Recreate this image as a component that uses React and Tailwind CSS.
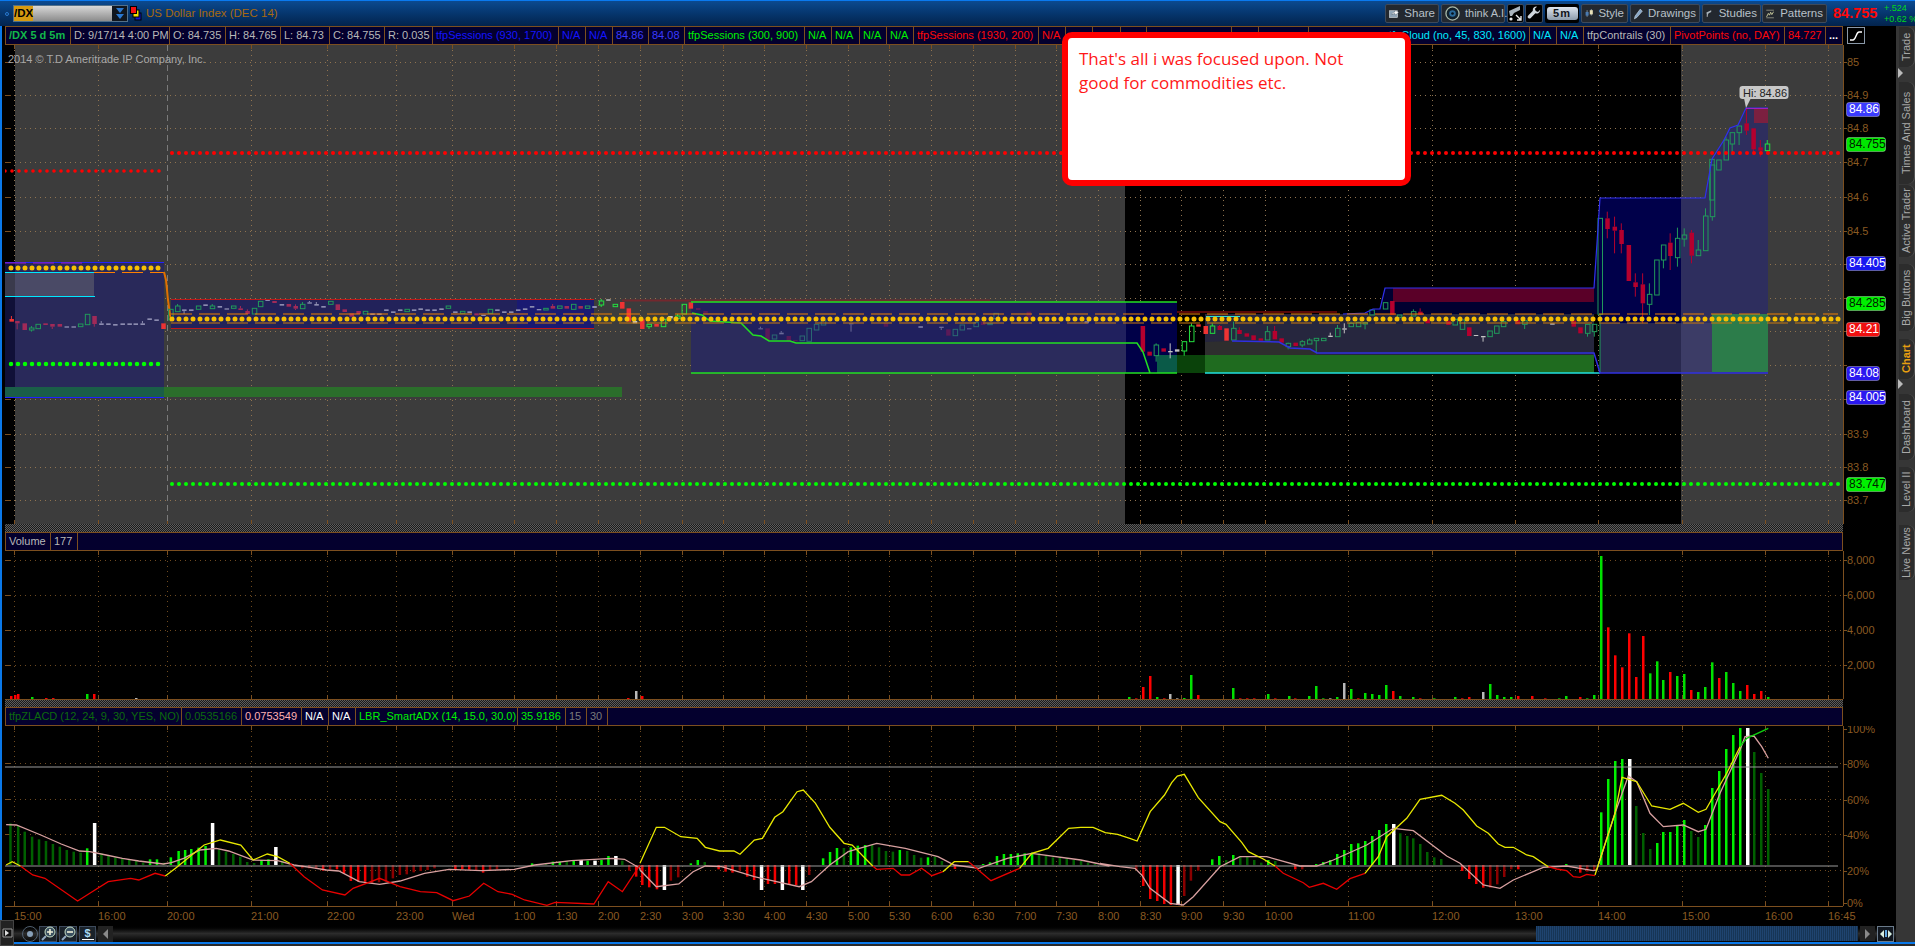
import React from 'react';

// raw zoom-crop readings mapped back to page pixels
const mapCandles = (rows, sx, ox, oy) =>
    rows.map(([x, t, b, k, wt, wb]) => ({
        x: x / sx + ox,
        t: t / 3 + oy,
        b: b / 3 + oy,
        k,
        wt: wt === undefined ? null : wt / 3 + oy,
        wb: wb === undefined ? null : wb / 3 + oy,
    }));

const leftCandles = mapCandles([
    [28, 237, 245, 'R', 228], [42, 243, 250, 'r', 243, 268], [60, 250, 270, 'r'], [77, 264, 270, 'g', 258, 275], [93, 253, 266, 'g'], [111, 250, 255, 'r'], [128, 252, 260, 'r', 252, 267], [146, 252, 260, 'r'],
    [163, 259, 263, 'w'], [180, 259, 263, 'w'], [197, 252, 260, 'g'], [214, 223, 254, 'g'], [231, 228, 252, 'r', 228, 260], [248, 250, 255, 'w', 243], [265, 250, 255, 'w'], [282, 252, 257, 'w'], [300, 250, 255, 'w'], [317, 250, 255, 'w'], [332, 250, 255, 'w'], [349, 250, 255, 'w', 243], [366, 235, 240, 'w'], [383, 238, 243, 'w'], [400, 250, 267, 'R'],
    [418, 208, 240, 'g'], [435, 198, 215, 'g', 192], [451, 208, 213, 'w', 208, 222], [468, 208, 213, 'w'], [486, 198, 208, 'g'], [503, 193, 198, 'w'], [520, 198, 206, 'g', 192], [538, 198, 203, 'w'], [555, 205, 209, 'w'], [572, 198, 205, 'g'], [589, 205, 210, 'r', 198], [606, 213, 222, 'r', 208], [623, 205, 222, 'g'], [638, 184, 200, 'g'], [655, 180, 183, 'w'], [672, 183, 189, 'r'], [690, 192, 197, 'w'], [707, 192, 200, 'r'], [724, 198, 206, 'r', 193, 210], [741, 193, 206, 'g', 186], [758, 187, 191, 'w', 183], [775, 192, 197, 'w', 186], [792, 198, 203, 'w'], [810, 184, 193, 'g'], [827, 193, 210, 'r'], [844, 208, 216, 'r'], [861, 220, 230, 'r'], [878, 213, 222, 'r'], [895, 214, 222, 'g'], [912, 220, 225, 'w'], [929, 220, 225, 'w'], [946, 208, 213, 'w'], [963, 214, 219, 'w'], [980, 208, 213, 'w'], [997, 208, 215, 'g'], [1014, 208, 213, 'w'], [1030, 205, 210, 'w'], [1047, 208, 213, 'w'], [1064, 208, 213, 'w'], [1081, 205, 210, 'w'], [1098, 198, 205, 'g'], [1115, 214, 219, 'w'], [1133, 214, 220, 'g'], [1150, 214, 219, 'w'], [1167, 220, 226, 'r'], [1184, 224, 228, 'w'], [1201, 208, 220, 'g'], [1218, 208, 213, 'w'], [1235, 214, 219, 'w'], [1252, 214, 219, 'w'], [1269, 208, 213, 'w'], [1286, 205, 210, 'w'], [1303, 198, 203, 'w'], [1320, 207, 211, 'w'], [1337, 205, 210, 'g'], [1354, 198, 206, 'r', 192], [1371, 198, 205, 'g'], [1388, 198, 206, 'r'], [1405, 193, 208, 'g'], [1422, 198, 206, 'r'], [1439, 198, 205, 'g'], [1456, 198, 204, 'w'],
    [1473, 183, 195, 'G', 177, 201], [1490, 178, 182, 'W'], [1507, 193, 200, 'G'], [1524, 186, 206, 'R'],
], 2.45, 0, 240);

const midCandles = mapCandles([
    [70, 115, 155, 'R'], [85, 153, 160, 'W'], [103, 148, 177, 'R'], [120, 163, 170, 'G', 163, 177], [138, 162, 170, 'R'], [155, 148, 170, 'G'], [172, 138, 145, 'W'], [190, 138, 145, 'G', 132], [206, 103, 132, 'G'], [222, 97, 116, 'R'], [240, 114, 120, 'D'], [258, 123, 130, 'D'],
    [393, 175, 178, 'F', 170], [410, 175, 210, 'D'], [427, 195, 207, 'E'], [444, 188, 193, 'F', 183], [462, 198, 213, 'D'], [478, 210, 214, 'D'], [495, 198, 212, 'E'], [512, 175, 214, 'E'], [530, 163, 180, 'E'], [547, 150, 165, 'E'], [615, 160, 163, 'F', 160, 185], [700, 160, 170, 'D'], [785, 168, 174, 'F'], [836, 170, 174, 'F', 170, 180], [853, 178, 197, 'D'], [870, 178, 197, 'E'], [887, 165, 180, 'E'], [904, 175, 178, 'F'], [921, 158, 170, 'E'], [938, 155, 165, 'D'], [955, 160, 164, 'E'], [970, 130, 146, 'E'], [1050, 125, 145, 'D'], [1192, 153, 160, 'F'],
], 2.45, 600, 270);

const rightCandles = mapCandles([
    [82, 408, 485, 'C'], [95, 485, 497, 'C'], [108, 465, 497, 'g', 460, 515], [122, 475, 485, 'C'], [135, 483, 487, 'W', 460, 505], [148, 478, 485, 'W'], [162, 455, 483, 'G', 455, 497], [176, 408, 455, 'G', 400],
    [189, 403, 410, 'R'], [203, 408, 432, 'R'], [216, 408, 430, 'G', 400], [230, 408, 420, 'C', 405], [243, 415, 452, 'R'], [257, 415, 450, 'g', 395], [268, 420, 432, 'C', 412], [282, 430, 440, 'C'], [295, 436, 450, 'C'], [309, 445, 452, 'C'], [322, 425, 450, 'g', 408], [336, 423, 448, 'C', 408], [349, 445, 458, 'C'], [362, 460, 470, 'g', 458, 478], [376, 458, 468, 'C'], [389, 455, 465, 'g', 450, 472], [403, 450, 462, 'g', 445], [416, 445, 452, 'g', 445, 490], [430, 445, 452, 'g'], [443, 437, 441, 'W', 428], [457, 415, 440, 'g', 405], [470, 415, 419, 'W', 400, 430], [483, 400, 410, 'g', 395], [497, 397, 410, 'g'], [510, 398, 402, 'g', 395, 418],
    [523, 360, 375, 'g'], [549, 338, 357, 'g'], [562, 333, 375, 'C'], [576, 375, 382, 'g'], [603, 365, 378, 'g', 358], [616, 365, 375, 'C', 355], [630, 388, 400, 'C'], [670, 392, 405, 'C'], [683, 388, 405, 'g'], [697, 390, 418, 'g'], [710, 412, 438, 'C'], [723, 435, 438, 'W'], [737, 438, 442, 'W', 438, 455], [750, 423, 440, 'g'], [763, 408, 430, 'g'], [776, 395, 410, 'g', 380], [803, 390, 403, 'C'], [817, 392, 403, 'g', 390, 417], [870, 400, 404, 'W'], [911, 392, 410, 'C'], [924, 412, 430, 'C'], [938, 403, 430, 'g', 403, 440], [951, 403, 425, 'g', 403, 440],
    [962, 85, 373, 'g', 85, 550], [976, 85, 117, 'C', 65, 145], [990, 110, 122, 'C', 80, 190], [1003, 120, 162, 'C', 100, 190], [1017, 165, 273, 'C'], [1030, 277, 291, 'C', 250, 320], [1044, 283, 340, 'C', 250, 400], [1057, 313, 343, 'g', 280, 375], [1071, 210, 315, 'g'], [1084, 165, 210, 'g', 165, 235], [1097, 158, 198, 'C', 130, 240], [1111, 145, 203, 'g', 113, 230], [1124, 135, 147, 'g', 115, 170], [1138, 128, 197, 'C', 120, 220], [1151, 180, 197, 'g', 150], [1165, 78, 182, 'g', 55], [1178, -75, 80, 'g', -75, 92],
], 1.924, 1100, 190);

const topCandles = mapCandles([
    [1070, 478, 600, 'g'], [1087, 480, 510, 'g'], [1105, 420, 480, 'g', 410], [1120, 398, 432, 'g', 398, 465], [1137, 378, 398, 'g', 378, 435], [1155, 370, 392, 'C', 325, 405], [1172, 385, 448, 'C', 385, 460], [1189, 442, 452, 'C', 420, 470], [1206, 432, 452, 'G', 420, 460],
], 2.45, 1275, 0);

const candleTone = {
    r: { fill: '#a02a58' }, C: { fill: '#b5002e' }, R: { fill: '#ee3333' }, D: { fill: '#5a1a58' },
    g: { stroke: '#21995a' }, G: { stroke: '#22e040' }, E: { stroke: '#2a6a72' },
    w: { fill: '#8c8cb0' }, W: { fill: '#c4c4c4' }, F: { fill: '#6a6a98' },
};

const Candle = ({ c }) => {
    const tone = candleTone[c.k];
    const color = tone.fill || tone.stroke;
    return (
        <g>
            {c.wt !== null && <line x1={c.x} x2={c.x} y1={c.wt} y2={c.t} stroke={color} />}
            {c.wb !== null && <line x1={c.x} x2={c.x} y1={c.b} y2={c.wb} stroke={color} />}
            <rect x={c.x - 2} y={c.t} width={4.5} height={c.b - c.t} fill={tone.fill || 'none'} stroke={tone.stroke || 'none'} />
        </g>
    );
};

// time axis, tick x and label
const times = [[14, '15:00'], [98, '16:00'], [167, '20:00'], [251, '21:00'], [327, '22:00'], [396, '23:00'], [452, 'Wed'], [514, '1:00'], [556, '1:30'], [598, '2:00'], [640, '2:30'], [682, '3:00'], [723, '3:30'], [764, '4:00'], [806, '4:30'], [848, '5:00'], [889, '5:30'], [931, '6:00'], [973, '6:30'], [1015, '7:00'], [1056, '7:30'], [1098, '8:00'], [1140, '8:30'], [1181, '9:00'], [1223, '9:30'], [1265, '10:00'], [1348, '11:00'], [1432, '12:00'], [1515, '13:00'], [1598, '14:00'], [1682, '15:00'], [1765, '16:00'], [1828, '16:45']];

const BROWN = '#7c4f1f';
const TAN = '#8f7350';
const DOT_BROWN = '#6e4a20';

const Grid = ({ top, bottom, rows, color }) => (
    <g>
        {times.map(([x]) => (
            <g key={x}>
                <line x1={x + 0.5} x2={x + 0.5} y1={top} y2={bottom} stroke={color} strokeDasharray="1 4" />
                <line x1={x + 0.5} x2={x + 0.5} y1={top} y2={top + 4} stroke={BROWN} />
                <line x1={x + 0.5} x2={x + 0.5} y1={bottom - 4} y2={bottom} stroke={BROWN} />
            </g>
        ))}
        {rows.map((y) => (
            <g key={y}>
                <line x1={15} x2={1843} y1={y + 0.5} y2={y + 0.5} stroke={color} strokeDasharray="1 4" />
                <line x1={5} x2={11} y1={y + 0.5} y2={y + 0.5} stroke={BROWN} />
            </g>
        ))}
        <line x1={5} x2={1843} y1={bottom + 0.5} y2={bottom + 0.5} stroke={BROWN} />
        <line x1={1843.5} x2={1843.5} y1={top} y2={bottom} stroke={BROWN} />
    </g>
);

const AxisLabels = ({ items }) => (
    <g>
        {items.map(([y, label]) => (
            <g key={y}>
                <line x1={1843} x2={1847} y1={y + 0.5} y2={y + 0.5} stroke={BROWN} />
                {label && <text x={1847} y={y + 4} fill="#8a5a22" fontSize={11}>{label}</text>}
            </g>
        ))}
    </g>
);

const Dots = ({ x1, x2, y, color, r = 5 }) => (
    <line x1={x1} x2={x2} y1={y} y2={y} stroke={color} strokeWidth={r} strokeLinecap="round" strokeDasharray="0 7" />
);

const Tag = ({ y, w, fill, text, label }) => (
    <g>
        <rect x={1846.5} y={y + 0.5} width={w} height={14} rx={2.5} fill={fill} stroke="#ffffff55" />
        <text x={1849} y={y + 11} fill={text} fontSize={12}>{label}</text>
    </g>
);

const PriceChart = () => {
    // the labels between 84.4 and 84 sit behind the price tags
    const priceLabels = [[62, '85'], [95, '84.9'], [128, '84.8'], [162, '84.7'], [197, '84.6'], [231, '84.5'], [264, ''], [298, ''], [331, ''], [365, ''], [399, ''], [434, '83.9'], [467, '83.8'], [500, '83.7']];
    const rows = priceLabels.map(([y]) => y);
    return (
        <svg className="block" width={1891} height={479} viewBox="5 45 1891 479">
            <rect x={5} y={45} width={1891} height={479} fill="#000" />
            <rect x={15} y={45} width={1110} height={479} fill="#3c3c3c" />
            <rect x={1681} y={45} width={162} height={479} fill="#3c3c3c" />
            <Grid top={45} bottom={524} rows={rows} color={TAN} />
            <line x1={167.5} x2={167.5} y1={45} y2={524} stroke="#7a7a7a" strokeDasharray="6 4" />
            <text x={8} y={63} fill="#a8a8a8" fontSize={11}>2014 © T.D Ameritrade IP Company, Inc.</text>

            {/* session on the far left */}
            <rect x={5} y={262} width={159} height={135} fill="#29295a" />
            <rect x={5} y={262} width={10} height={135} fill="#101038" />
            <rect x={15} y={272} width={79} height={24} fill="#4a4a66" />
            <rect x={5} y={272} width={10} height={24} fill="#3a3a4c" />
            <rect x={5} y={387} width={617} height={10} fill="#2b6e2b" />
            <rect x={5} y={387} width={159} height={10} fill="#1a5e48" />
            <line x1={5} x2={164} y1={397.5} y2={397.5} stroke="#2020ff" />
            <line x1={5} x2={164} y1={262.5} y2={262.5} stroke="#2020ff" />
            <line x1={5} x2={84} y1={263} y2={263} stroke="#a020c0" strokeDasharray="21 7" />
            <line x1={5} x2={94} y1={272.5} y2={272.5} stroke="#00e8ff" />
            <line x1={5} x2={95} y1={296.5} y2={296.5} stroke="#00e8ff" />
            <line x1={94} x2={164} y1={272.5} y2={272.5} stroke="#ff8000" strokeDasharray="21 7" />
            <polyline points="164,272 166,280 168,300 170,315 172,322" fill="none" stroke="#e07000" strokeWidth={2} />

            {/* red box */}
            <rect x={171} y={300} width={423} height={28} fill="#22225a" />
            <rect x={517} y={300} width={77} height={28} fill="#1a1a72" />
            <line x1={171} x2={594} y1={299.5} y2={299.5} stroke="#c01818" />
            <line x1={171} x2={594} y1={328.5} y2={328.5} stroke="#c01818" />
            <line x1={622} x2={990} y1={300.5} y2={300.5} stroke="#73282e" strokeWidth={2} />
            <line x1={1039} x2={1079} y1={312} y2={312} stroke="#5a1018" strokeWidth={2} />
            <line x1={1102} x2={1337} y1={312} y2={312} stroke="#5a0808" strokeWidth={2} />

            {/* green box */}
            <rect x={691} y={302} width={435} height={71} fill="#2b2b5c" />
            <polygon points="691,302 1126,302 1126,343 796,343 790,341 769,341 761,336 753,335 741,323 710,321 702,315 692,313" fill="#20205e" />
            <rect x={1126} y={302} width={51} height={71} fill="#000048" />
            <rect x={1157} y={355} width={20} height={18} fill="#0a5a48" />
            <rect x={1177} y={355} width={28} height={18} fill="#0a420a" />
            <rect x={1205} y={314} width={389} height={41} fill="#26263e" />
            <polygon points="1205,342 1232,341 1279,342 1290,348 1310,349 1317,353 1317,355 1205,355" fill="#2e2e2e" />
            <rect x={1205} y={355} width={389} height={18} fill="#1f6b1f" />

            {/* breakout boxes */}
            <polygon points="1343,314 1365,313 1373,309 1380,309 1385,288 1594,288 1600,198 1600,314" fill="#000030" />
            <rect x={1393} y={288} width={201} height={14} fill="#5a0028" />
            <rect x={1600} y={198} width={81} height={125} fill="#00004a" />
            <rect x={1600} y={323} width={81} height={50} fill="#28284e" />
            <polygon points="1681,198 1705,198 1712,159 1724,140 1730,128 1738,125 1746,108 1768,108 1768,373 1681,373" fill="#2e2e5e" />
            <rect x={1681} y={323} width={31} height={50} fill="#3c3c66" />
            <rect x={1754} y={108} width={14} height={15} fill="#7b2040" />
            <rect x={1712} y={314} width={56} height={58} fill="#2c7c4a" />

            {leftCandles.map((c, i) => <Candle key={i} c={c} />)}
            {midCandles.map((c, i) => <Candle key={i} c={c} />)}
            {rightCandles.map((c, i) => <Candle key={i} c={c} />)}
            {topCandles.map((c, i) => <Candle key={i} c={c} />)}

            <line x1={691} x2={1177} y1={302} y2={302} stroke="#22e022" strokeWidth={1.5} />
            <line x1={691} x2={1177} y1={373} y2={373} stroke="#22e022" strokeWidth={1.5} />
            <polyline points="692,313 702,315 710,321 741,323 753,335 761,336 769,341 790,341 796,343 1137,343 1143,352 1150,373" fill="none" stroke="#22e022" strokeWidth={1.5} />
            <line x1={1205} x2={1600} y1={373} y2={373} stroke="#20e0e0" strokeWidth={1.5} />
            <line x1={1206} x2={1240} y1={316.5} y2={316.5} stroke="#20e0e0" />
            <polyline points="1232,341 1279,342 1290,348 1310,349 1317,353 1594,353 1600,373 1768,373" fill="none" stroke="#3030e0" strokeWidth={1.5} />
            <polyline points="1343,314 1365,313 1373,309 1380,309 1385,288 1594,288 1600,198 1705,198 1712,159 1724,140 1730,128 1738,125 1746,108 1768,108" fill="none" stroke="#3030f0" strokeWidth={1.2} />
            <line x1={1746} x2={1768} y1={108.5} y2={108.5} stroke="#a020c0" />

            <line x1={171} x2={1838} y1={314} y2={314} stroke="#f08000" strokeWidth={1.2} strokeDasharray="21 7" />
            <line x1={171} x2={1838} y1={323} y2={323} stroke="#c87a10" strokeWidth={1.2} strokeDasharray="21 7" />
            <Dots x1={11} x2={165} y={268} color="#f8c000" />
            <Dots x1={172} x2={1839} y={319} color="#f8c000" />
            <Dots x1={11} x2={165} y={364} color="#00ff00" r={4.5} />
            <Dots x1={172} x2={1839} y={484} color="#00ff00" r={4} />
            <Dots x1={5} x2={165} y={171} color="#ff0000" r={3.6} />
            <Dots x1={172} x2={1839} y={153} color="#ff0000" r={4} />

            <AxisLabels items={priceLabels} />
            <Tag y={102} w={33} fill="#3b3bff" text="#fff" label="84.86" />
            <Tag y={137} w={39} fill="#00e800" text="#002000" label="84.755" />
            <Tag y={256} w={39} fill="#1818f0" text="#fff" label="84.405" />
            <Tag y={296} w={39} fill="#00f000" text="#002000" label="84.285" />
            <Tag y={322} w={33} fill="#f01010" text="#fff" label="84.21" />
            <Tag y={366} w={33} fill="#2a18f0" text="#fff" label="84.08" />
            <Tag y={390} w={39} fill="#2a18f0" text="#fff" label="84.005" />
            <Tag y={477} w={39} fill="#00f000" text="#002000" label="83.747" />

            <polygon points="1744,98 1751,98 1746,108" fill="#c8c8c8" />
            <rect x={1739.5} y={86} width={49} height={13} rx={3} fill="#c8c8c8" />
            <text x={1743} y={96.5} fill="#222" fontSize={11}>Hi: 84.86</text>
        </svg>
    );
};

// volume: [x, top y, colour]; small bars read from 1100-1600, big ones from 1600 on
const vs = { g: '#00e000', r: '#ff0000', w: '#b8b8b8' };
const volumeBars = [
    [11, 696, 'r'], [15, 695, 'r'], [18, 694, 'r'], [32, 697, 'g'], [46, 698, 'r'], [53, 698, 'r'], [87, 694, 'g'], [94, 694, 'r'], [136, 698, 'w'], [628, 698, 'r'], [636, 691, 'w'], [642, 696, 'r'],
    ...[[87, 171, 'g'], [108, 175, 'r'], [129, 141, 'r'], [150, 108, 'r'], [171, 171, 'g'], [192, 175, 'r'], [210, 162, 'w'], [231, 175, 'w'], [252, 174, 'g'], [273, 105, 'g'], [294, 165, 'r'], [399, 144, 'g'], [420, 175, 'r'], [441, 175, 'r'], [462, 175, 'r'], [504, 162, 'g'], [525, 175, 'r'], [567, 168, 'g'], [585, 175, 'r'], [627, 168, 'g'], [648, 138, 'g'], [669, 175, 'g'], [690, 175, 'w'], [711, 171, 'g'], [732, 129, 'w'], [753, 147, 'g'], [774, 175, 'r'], [795, 159, 'g'], [816, 162, 'g'], [837, 165, 'g'], [858, 135, 'g'], [879, 153, 'r'], [900, 168, 'g'], [939, 171, 'g'], [960, 175, 'r'], [1002, 175, 'g'], [1065, 171, 'g'], [1086, 175, 'r'], [1107, 171, 'r'], [1149, 156, 'w'], [1170, 132, 'g'], [1191, 165, 'g'], [1212, 171, 'g'], [1233, 171, 'g'], [1254, 168, 'r'], [1296, 168, 'r'], [1335, 175, 'r'], [1377, 175, 'g'], [1398, 168, 'g'], [1440, 171, 'r'], [1461, 175, 'g'], [1482, 165, 'g']].map(([x, y, k]) => [x / 3 + 1100, y / 3 + 640, k]),
    ...[[303, 78, 'g'], [324, 292, 'r'], [345, 376, 'r'], [366, 412, 'r'], [387, 310, 'r'], [408, 441, 'r'], [429, 318, 'r'], [450, 430, 'g'], [471, 394, 'g'], [489, 450, 'g'], [510, 426, 'r'], [531, 438, 'g'], [552, 432, 'g'], [573, 480, 'r'], [594, 486, 'g'], [615, 471, 'g'], [636, 397, 'g'], [657, 444, 'r'], [678, 426, 'g'], [699, 459, 'g'], [720, 483, 'g'], [741, 465, 'r'], [762, 492, 'r'], [783, 483, 'r'], [804, 501, 'g']].map(([x, y, k]) => [x / 3 + 1500, y / 3 + 530, k]),
];

const VolumeChart = () => (
    <svg className="block" width={1891} height={149} viewBox="5 551 1891 149">
        <rect x={5} y={551} width={1891} height={149} fill="#000" />
        <Grid top={551} bottom={699} rows={[560, 595, 630, 665]} color={DOT_BROWN} />
        {volumeBars.map(([x, y, k], i) => <rect key={i} x={x - 1} y={y} width={2.5} height={699 - y} fill={vs[k]} />)}
        <AxisLabels items={[[560, '8,000'], [595, '6,000'], [630, '4,000'], [665, '2,000']]} />
    </svg>
);

const mapBars = (rows, sx, ox, oy) => rows.map(([x, y, k]) => [x / sx + ox, y / 3 + oy, k]);
const hs = { g: '#00f000', d: '#006000', r: '#f00000', e: '#8a0000', w: '#ffffff' };
const histBars = [
    ...mapBars([[25, 250, 'd'], [44, 258, 'd'], [60, 275, 'd'], [78, 290, 'd'], [95, 298, 'd'], [112, 303, 'd'], [129, 312, 'd'], [146, 320, 'd'], [163, 330, 'd'], [180, 335, 'd'], [197, 338, 'd'], [213, 325, 'g'], [230, 249, 'w'], [248, 340, 'd'], [265, 345, 'd'], [282, 352, 'd'], [299, 355, 'd'], [316, 358, 'd'], [333, 363, 'd'], [350, 368, 'd'], [367, 358, 'g'], [384, 358, 'g'], [401, 368, 'd'], [418, 352, 'g'], [437, 333, 'g'], [453, 330, 'g'], [468, 327, 'g'], [486, 323, 'g'], [503, 318, 'g'], [519, 249, 'w'], [536, 328, 'd'], [553, 335, 'd'], [571, 342, 'd'], [588, 350, 'd'], [605, 366, 'd'], [622, 369, 'd'], [640, 360, 'g'], [657, 358, 'g'], [674, 321, 'w'], [691, 362, 'd'], [740, 385, 'e'], [757, 385, 'e'], [774, 385, 'e'], [791, 392, 'r'], [808, 388, 'e'], [825, 388, 'r'], [842, 400, 'r'], [859, 423, 'r'], [877, 425, 'r'], [894, 425, 'r'], [911, 430, 'e'], [928, 427, 'e'], [945, 425, 'e'], [962, 415, 'e'], [979, 405, 'e'], [996, 403, 'e'], [1013, 397, 'e'], [1030, 393, 'e'], [1047, 390, 'e'], [1064, 385, 'e'], [1115, 387, 'r'], [1132, 387, 'r'], [1149, 389, 'r'], [1166, 392, 'e'], [1183, 398, 'r'], [1200, 390, 'e'], [1217, 388, 'e'], [1303, 370, 'g'], [1320, 372, 'g'], [1337, 372, 'd'], [1354, 365, 'g'], [1371, 365, 'g'], [1388, 363, 'd'], [1405, 360, 'g'], [1422, 360, 'w'], [1439, 362, 'g'], [1456, 362, 'w'], [1473, 360, 'g'], [1490, 348, 'g'], [1507, 348, 'w'], [1524, 362, 'd'], [1541, 392, 'e'], [1558, 410, 'r']], 2.45, 0, 740),
    ...mapBars([[5, 435, 'r'], [22, 442, 'r'], [41, 448, 'r'], [58, 450, 'w'], [75, 422, 'e'], [93, 412, 'e'], [124, 370, 'g'], [141, 360, 'g'], [158, 366, 'd'], [192, 388, 'r'], [209, 395, 'r'], [226, 398, 'r'], [244, 392, 'e'], [262, 410, 'r'], [279, 420, 'r'], [296, 450, 'w'], [313, 432, 'r'], [330, 432, 'r'], [347, 450, 'w'], [365, 435, 'r'], [382, 435, 'r'], [397, 450, 'w'], [414, 405, 'e'], [448, 355, 'g'], [465, 336, 'g'], [482, 324, 'g'], [499, 324, 'd'], [516, 322, 'g'], [533, 317, 'g'], [551, 315, 'g'], [568, 315, 'd'], [585, 322, 'd'], [602, 333, 'd'], [619, 335, 'd'], [636, 330, 'g'], [654, 333, 'd'], [671, 345, 'd'], [688, 353, 'd'], [705, 352, 'g'], [722, 350, 'd'], [739, 363, 'd'], [771, 387, 'r'], [840, 372, 'g'], [857, 367, 'g'], [874, 348, 'g'], [891, 342, 'g'], [908, 342, 'g'], [925, 340, 'g'], [942, 340, 'g'], [960, 338, 'g'], [977, 340, 'd'], [994, 348, 'd'], [1011, 352, 'd'], [1028, 352, 'd'], [1045, 355, 'd'], [1062, 360, 'd'], [1080, 362, 'd'], [1097, 368, 'd'], [1114, 372, 'd']], 2.45, 640, 740),
    ...mapBars([[108, 690, 'e'], [129, 738, 'r'], [150, 777, 'r'], [171, 783, 'r'], [192, 792, 'r'], [212, 795, 'r'], [232, 795, 'w'], [252, 768, 'e'], [272, 722, 'e'], [294, 692, 'e'], [336, 658, 'g'], [357, 648, 'g'], [378, 660, 'd'], [399, 645, 'g'], [420, 650, 'd'], [441, 650, 'd'], [462, 660, 'd'], [483, 668, 'd'], [504, 660, 'g'], [525, 663, 'd'], [585, 688, 'r'], [606, 688, 'e'], [648, 672, 'g'], [669, 666, 'g'], [690, 660, 'g'], [711, 642, 'g'], [732, 630, 'g'], [753, 612, 'g'], [774, 610, 'g'], [795, 603, 'g'], [816, 588, 'g'], [837, 570, 'g'], [858, 552, 'g'], [879, 552, 'w'], [900, 580, 'd'], [921, 588, 'd'], [939, 595, 'd'], [960, 612, 'd'], [981, 636, 'd'], [1002, 652, 'd'], [1023, 657, 'd'], [1086, 693, 'r'], [1107, 717, 'r'], [1128, 732, 'r'], [1149, 743, 'r'], [1170, 743, 'e'], [1191, 733, 'e'], [1212, 711, 'e'], [1233, 688, 'e'], [1254, 688, 'r'], [1296, 675, 'g'], [1398, 672, 'g'], [1440, 698, 'r'], [1461, 695, 'e'], [1482, 690, 'e']], 3, 1100, 640),
    ...mapBars([[303, 847, 'g'], [324, 747, 'g'], [345, 693, 'g'], [366, 687, 'g'], [387, 687, 'w'], [408, 828, 'd'], [429, 909, 'd'], [450, 957, 'd'], [471, 939, 'g'], [489, 906, 'g'], [510, 906, 'g'], [531, 885, 'g'], [552, 870, 'g'], [573, 903, 'd'], [594, 921, 'd'], [615, 885, 'g'], [636, 774, 'g'], [657, 723, 'g'], [678, 657, 'g'], [699, 615, 'g'], [720, 594, 'g'], [741, 594, 'w'], [762, 666, 'd'], [783, 729, 'd'], [804, 777, 'd']], 3, 1500, 530),
];

const pts = (rows, sx, ox, oy) => rows.map(([x, y]) => `${(x / sx + ox).toFixed(1)},${(y / 3 + oy).toFixed(1)}`).join(' ');

const pinkLine = [
    pts([[15, 254], [40, 255], [100, 285], [150, 312], [195, 333], [220, 335], [260, 345], [300, 355], [340, 363], [400, 372], [420, 368], [450, 355], [490, 330], [530, 325], [560, 333], [620, 360], [680, 362], [720, 375], [760, 382], [800, 390], [830, 393], [880, 425], [930, 433], [980, 423], [1040, 400], [1100, 388], [1180, 392], [1260, 388], [1310, 375], [1400, 362], [1500, 355], [1530, 358], [1568, 385]], 2.45, 0, 740),
    pts([[0, 390], [40, 440], [95, 432], [130, 395], [160, 378], [200, 380], [280, 410], [390, 440], [420, 425], [465, 375], [510, 335], [580, 310], [650, 325], [730, 350], [770, 375], [830, 385], [900, 355], [960, 340], [1080, 360], [1150, 378]], 2.45, 640, 740),
    pts([[0, 670], [60, 680], [105, 685], [125, 705], [150, 745], [210, 790], [250, 795], [280, 770], [360, 680], [420, 650], [500, 650], [600, 678], [650, 678], [700, 660], [800, 615], [880, 565], [940, 572], [1040, 648], [1080, 670], [1150, 735], [1200, 745], [1240, 720], [1330, 682], [1400, 678], [1440, 685], [1480, 692]], 3, 1100, 640),
    pts([[290, 1020], [345, 850], [385, 738], [410, 755], [450, 850], [490, 890], [550, 885], [595, 905], [618, 898], [660, 790], [720, 660], [735, 620], [762, 618], [785, 650], [805, 685]], 3, 1500, 530),
].join(' ');

const Z7 = (r) => pts(r, 2.45, 0, 740);
const Z9 = (r) => pts(r, 2.45, 640, 740);
const Z12 = (r) => pts(r, 3, 1100, 640);
const Z8 = (r) => pts(r, 3, 1500, 530);

const yellowLines = [
    Z7([[15, 375], [30, 365], [50, 378]]),
    Z7([[405, 408], [430, 385], [500, 315], [540, 300], [590, 315], [620, 360], [655, 342], [680, 350], [710, 370]]),
    Z9([[0, 370], [40, 262], [60, 262], [100, 290], [140, 295], [160, 322], [195, 333], [230, 333], [245, 343], [280, 300], [300, 295], [330, 232], [350, 215], [385, 155], [400, 150], [430, 190], [465, 262], [500, 310], [520, 315], [570, 378]]),
    Z9([[742, 395], [770, 365], [805, 365]]),
    Z9([[930, 385], [960, 340], [1000, 325], [1050, 265], [1080, 262], [1110, 262], [1140, 278], [1170, 283], [1200, 295], [1218, 303], [1250, 215], [1285, 165]]) + ' ' + Z12([[215, 428], [232, 408], [253, 403], [295, 473], [360, 545], [378, 553], [425, 607], [445, 635], [490, 657], [525, 678]]),
    Z12([[795, 700], [835, 650], [860, 590], [920, 535], [960, 478], [1025, 466], [1065, 490], [1090, 510], [1130, 558], [1165, 580], [1195, 612], [1215, 622], [1240, 622], [1280, 645], [1300, 650], [1345, 680]]),
    Z8([[285, 1035], [345, 850], [366, 742], [410, 755], [455, 828], [510, 838], [550, 820], [595, 847], [618, 838], [680, 730], [720, 650]]),
];
const redLines = [
    Z7([[50, 378], [80, 405], [110, 415], [190, 483], [220, 460], [265, 425], [320, 415], [340, 420], [380, 400], [405, 408]]),
    Z7([[710, 370], [745, 410], [790, 450], [845, 465], [865, 445], [930, 415], [980, 440], [1030, 455], [1070, 458], [1110, 482], [1150, 468], [1185, 430], [1220, 455], [1255, 463], [1285, 480], [1340, 496], [1360, 487], [1455, 492], [1490, 425], [1525, 455], [1568, 375]]),
    Z9([[570, 378], [580, 388], [620, 385], [640, 405], [660, 405], [690, 385], [715, 407], [742, 395]]),
    Z9([[805, 365], [860, 422], [930, 385]]),
    Z12([[525, 678], [550, 700], [610, 728], [628, 742], [670, 730], [710, 748], [750, 716], [795, 700]]),
    Z12([[1345, 680], [1370, 687], [1400, 692], [1420, 710], [1440, 712], [1460, 703], [1485, 707]]),
];

const OscChart = () => (
    <svg className="block" width={1891} height={199} viewBox="5 726 1891 199">
        <rect x={5} y={726} width={1891} height={199} fill="#000" />
        <Grid top={726} bottom={906} rows={[763, 799, 834, 870]} color={DOT_BROWN} />
        {histBars.map(([x, y, k], i) => (
            <rect key={i} x={x - 1} y={Math.min(y, 865)} width={k === 'w' ? 3.5 : 2.5} height={Math.abs(y - 865)} fill={hs[k]} />
        ))}
        <line x1={5} x2={1838} y1={767} y2={767} stroke="#9a9a9a" />
        <line x1={5} x2={1838} y1={866} y2={866} stroke="#9a9a9a" />
        <polyline points={pinkLine} fill="none" stroke="#d8a0a0" strokeWidth={1.3} />
        {redLines.map((p, i) => <polyline key={i} points={p} fill="none" stroke="#e80000" strokeWidth={1.3} />)}
        {yellowLines.map((p, i) => <polyline key={i} points={p} fill="none" stroke="#e8e800" strokeWidth={1.3} />)}
        <polyline points={Z8([[720, 650], [740, 625], [805, 595]])} fill="none" stroke="#10d010" strokeWidth={1.3} />
        <AxisLabels items={[[729, '100%'], [764, '80%'], [800, '60%'], [835, '40%'], [871, '20%'], [903, '0%']]} />
        {times.map(([x, label]) => (
            <text key={x} x={x} y={920} fill="#8a5a22" fontSize={11}>{label}</text>
        ))}
    </svg>
);

const BLUE = 'text-[#1414ff]';
const GREEN = 'text-[#00f000]';
const RED = 'text-[#ff0808]';
const CYAN = 'text-[#00e8ff]';
const GREY = 'text-[#b8b8b8]';

const mainCells = [
    { t: '/DX 5 d 5m', w: 'w-[65px]', c: 'text-[#12b84a] font-bold' },
    { t: 'D: 9/17/14 4:00 PM', w: 'w-[99px]', c: GREY },
    { t: 'O: 84.735', w: 'w-[56px]', c: GREY },
    { t: 'H: 84.765', w: 'w-[55px]', c: GREY },
    { t: 'L: 84.73', w: 'w-[49px]', c: GREY },
    { t: 'C: 84.755', w: 'w-[55px]', c: GREY },
    { t: 'R: 0.035', w: 'w-[48px]', c: GREY },
    { t: 'tfpSessions (930, 1700)', w: 'w-[126px]', c: BLUE },
    { t: 'N/A', w: 'w-[27px]', c: BLUE },
    { t: 'N/A', w: 'w-[27px]', c: BLUE },
    { t: '84.86', w: 'w-[36px]', c: 'text-[#3a3aff]' },
    { t: '84.08', w: 'w-[36px]', c: 'text-[#3a3aff]' },
    { t: 'tfpSessions (300, 900)', w: 'w-[120px]', c: GREEN },
    { t: 'N/A', w: 'w-[27px]', c: GREEN },
    { t: 'N/A', w: 'w-[28px]', c: GREEN },
    { t: 'N/A', w: 'w-[27px]', c: GREEN },
    { t: 'N/A', w: 'w-[27px]', c: GREEN },
    { t: 'tfpSessions (1930, 200)', w: 'w-[125px]', c: RED },
    { t: 'N/A', w: 'w-[27px]', c: RED },
    // these sit under the note, only their top edge shows
    { t: '', w: 'w-[27px]', c: RED },
    { t: '', w: 'w-[28px]', c: RED },
    { t: '', w: 'w-[26px]', c: RED },
    { t: '', w: 'w-[85px]', c: RED },
    { t: '', w: 'w-[27px]', c: RED },
    { t: '', w: 'w-[50px]', c: RED },
    { t: 'tfpCloud (no, 45, 830, 1600)', w: 'w-[221px] text-right', c: CYAN },
    { t: 'N/A', w: 'w-[27px]', c: CYAN },
    { t: 'N/A', w: 'w-[27px]', c: CYAN },
    { t: 'tfpContrails (30)', w: 'w-[87px]', c: GREY },
    { t: 'PivotPoints (no, DAY)', w: 'w-[114px]', c: RED },
    { t: '84.727', w: 'w-[41px]', c: RED },
    { t: '...', w: 'w-[18px]', c: 'text-white font-bold' },
];

const volumeCells = [
    { t: 'Volume', w: 'w-[45px]', c: GREY },
    { t: '177', w: 'w-[27px]', c: GREY },
];

const oscCells = [
    { t: 'tfpZLACD (12, 24, 9, 30, YES, NO)', w: 'w-[176px]', c: 'text-[#0d6a0d]' },
    { t: '0.0535166', w: 'w-[60px]', c: 'text-[#0d6a0d]' },
    { t: '0.0753549', w: 'w-[60px]', c: 'text-[#ffb0b0]' },
    { t: 'N/A', w: 'w-[27px]', c: 'text-white' },
    { t: 'N/A', w: 'w-[27px]', c: 'text-white' },
    { t: 'LBR_SmartADX (14, 15.0, 30.0)', w: 'w-[162px]', c: GREEN },
    { t: '35.9186', w: 'w-[48px]', c: GREEN },
    { t: '15', w: 'w-[21px]', c: 'text-[#7a7a7a]' },
    { t: '30', w: 'w-[21px]', c: 'text-[#7a7a7a]' },
];

const StatusRow = ({ cells, children }) => (
    <div className="flex h-[19px] w-[1891px] shrink-0 bg-black">
        <div className="flex w-[1838px] overflow-hidden border border-[#7c4f1f] bg-[#04002e] text-[11px] leading-[17px]">
            {cells.map((cell, i) => (
                <div key={i} className={`${cell.w} ${cell.c} shrink-0 overflow-hidden whitespace-nowrap border-r border-[#7c4f1f] px-[3px]`}>
                    {cell.t}
                </div>
            ))}
        </div>
        {children}
    </div>
);

const Hatch = ({ className }) => (
    <div className={`${className} w-[1838px] shrink-0 bg-[repeating-conic-gradient(#5c5c5c_0_25%,#1a1a1a_0_50%)] bg-[length:2px_2px]`} />
);

const toolBtn = 'flex h-[19px] shrink-0 items-center gap-[5px] whitespace-nowrap rounded-[2px] border border-[#3d4a5c] bg-[#23282f] px-[3px] text-[11.5px] text-[#b8c0c8]';

const Flask = () => (
    <svg width="13" height="15" viewBox="0 0 13 15">
        <polygon points="1,5 12,0 12,4 6,7 4,11 2,11" fill="#aab4bc" />
        <circle cx="3" cy="13" r="1.6" fill="#e8e8e8" />
    </svg>
);

const Toolbar = () => (
    <div className="flex items-center gap-[2px]">
        <div className={`${toolBtn} w-[54px]`}>
            <svg width="17" height="15" viewBox="0 0 17 15">
                <rect x="1" y="3" width="13" height="11" fill="#8fa3b5" stroke="#dfe6ec" />
                <path d="M5 10 C5 6 8 5 10 5 V2 L16 6 L10 10 V7.5 C8 7.5 6 8 5 10Z" fill="#fff" stroke="#33404c" strokeWidth=".5" />
            </svg>
            Share
        </div>
        <div className={`${toolBtn} w-[64px] gap-[2px] text-[11px]`}>
            <svg className="shrink-0" width="15" height="15" viewBox="0 0 16 16">
                <circle cx="8" cy="8" r="7" fill="#10202c" stroke="#a8b8a8" strokeWidth="1.4" />
                <circle cx="8" cy="8" r="3.5" fill="#2a6a9a" />
                <circle cx="8" cy="8" r="1.4" fill="#05101a" />
            </svg>
            think A.I.
        </div>
        <div className="flex h-[19px] w-[17px] items-center justify-center rounded-[2px] border border-[#3d4a5c] bg-black">
            <svg width="15" height="15" viewBox="0 0 15 15">
                <polygon points="1,5 12,0 12,4 6,7 4,10 2,10" fill="#aab4bc" />
                <circle cx="3" cy="13" r="1.6" fill="#e8e8e8" />
                <path d="M8 9 L13 14 M13 10 V14 H9" stroke="#e8e8e8" strokeWidth="1.4" fill="none" />
            </svg>
        </div>
        <div className="-ml-[1px] flex h-[19px] w-[18px] items-center justify-center rounded-[2px] border border-[#3d4a5c] bg-black">
            <svg width="15" height="15" viewBox="0 0 24 24" fill="#cfd6dc">
                <path d="M21 6.5a5.5 5.5 0 0 1-7.6 5.1L6 19a2.8 2.8 0 0 1-4-4l7.4-7.4A5.5 5.5 0 0 1 16 1l-3.5 3.5 1.5 3.5 3.5 1.5L21 6z" />
            </svg>
        </div>
        <div className="flex h-[19px] w-[34px] items-center justify-center rounded-[2px] bg-black">
            <div className="flex h-[13px] w-[31px] items-center justify-center rounded-[3px] bg-gradient-to-b from-[#dfe6ee] to-[#8d9cac] text-[11px] font-bold tracking-[1px] text-[#10141a]">5m</div>
        </div>
        <div className={`${toolBtn} w-[47px] gap-[4px]`}>
            <svg width="14" height="15" viewBox="0 0 14 15">
                <path d="M3.5 2V13 M10.5 0V11" stroke="#b8d0e0" />
                <rect x="1" y="5" width="5" height="6" fill="#4a7ab0" />
                <rect x="8" y="2" width="5" height="7" fill="#e8e0b8" />
            </svg>
            Style
        </div>
        <div className={`${toolBtn} w-[70px] gap-[4px]`}>
            <svg width="13" height="16" viewBox="0 0 13 16">
                <path d="M9 1L12 4L4 13L0.5 15L1.5 11Z" fill="#8aa8c8" stroke="#d8e4ee" strokeWidth=".7" />
            </svg>
            Drawings
        </div>
        <div className={`${toolBtn} w-[59px] gap-[7px]`}>
            <Flask />
            Studies
        </div>
        <div className={`${toolBtn} -ml-[1px] w-[65px] gap-[6px]`}>
            <svg width="14" height="14" viewBox="0 0 14 14">
                <path d="M.5 .5H13.5 M.5 13.5H13.5" stroke="#c8c8b0" />
                <path d="M1 12L4 6L6 9L8 4L10 8L13 3" fill="none" stroke="#dcdca8" strokeWidth="1.4" />
            </svg>
            Patterns
        </div>
    </div>
);

const Header = () => (
    <div className="flex h-[26px] shrink-0 items-center border-t border-[#0a7af0] bg-gradient-to-b from-[#0b4a90] to-[#03234d]">
        <div className="ml-[5px] h-[4px] w-[4px] rounded-full border border-[#2a7ad0]" />
        <div className="ml-[4px] flex h-[17px] w-[115px] items-center overflow-hidden border border-[#52708a] bg-gradient-to-b from-[#d8d8d8] to-[#8c8c8c]">
            <div className="flex h-full w-[19px] items-center bg-[#d69a10] text-[11.5px] font-bold text-black">/DX</div>
            <div className="flex-1" />
            <div className="flex h-full w-[15px] flex-col items-center justify-center gap-[1px] bg-[#10161e]">
                <div className="h-0 w-0 border-x-[4px] border-t-[5px] border-x-transparent border-t-[#2a78d0]" />
                <div className="h-0 w-0 border-x-[4px] border-t-[5px] border-x-transparent border-t-[#2a78d0]" />
            </div>
        </div>
        <svg className="ml-[2px]" width="12" height="15" viewBox="0 0 12 15">
            <rect x="5" y="7" width="6" height="7" fill="#1414d0" stroke="#000" />
            <rect x="3" y="4" width="6" height="7" fill="#f0e000" stroke="#000" />
            <rect x="0.5" y="0.5" width="6" height="7" fill="#f01010" stroke="#000" />
        </svg>
        <div className="ml-[4px] text-[11.5px] text-[#a86a10]">US Dollar Index (DEC 14)</div>
        <div className="flex-1" />
        <Toolbar />
        <div className="ml-[6px] w-[44px] text-[14.5px] font-bold text-[#ff0808]">84.755</div>
        <div className="ml-[7px] w-[31px] whitespace-nowrap text-[9px] leading-[11px] text-[#00d820]">
            <div>+.524</div>
            <div>+0.62 %</div>
        </div>
    </div>
);

const tabBase = 'flex w-[16px] shrink-0 items-center justify-center whitespace-nowrap rounded-bl-[7px] rounded-tl-[7px] border-l border-[#555] bg-[#2c2c2c] text-[11px] [writing-mode:vertical-rl] rotate-180';

const Notch = () => (
    <div className="ml-[2px] h-0 w-0 border-y-[5px] border-l-[5px] border-y-transparent border-l-[#bbb]" />
);

const RightTabs = () => (
    <div className="flex w-[19px] shrink-0 flex-col items-end bg-[#363636] pt-[1px]">
        <div className={`${tabBase} h-[40px] text-[#a8a8a8]`}>Trade</div>
        <div className="h-[10px] w-full pt-[1px]"><Notch /></div>
        <div className={`${tabBase} mt-[5px] h-[102px] text-[#a8a8a8]`}>Times And Sales</div>
        <div className={`${tabBase} mt-[1px] h-[72px] text-[#a8a8a8]`}>Active Trader</div>
        <div className={`${tabBase} mt-[7px] h-[67px] text-[#a8a8a8]`}>Big Buttons</div>
        <div className={`${tabBase} mt-[8px] h-[40px] font-bold text-[#e8a010]`}>Chart</div>
        <div className="h-[8px] w-full"><Notch /></div>
        <div className={`${tabBase} mt-[7px] h-[66px] text-[#a8a8a8]`}>Dashboard</div>
        <div className={`${tabBase} mt-[7px] h-[45px] text-[#a8a8a8]`}>Level II</div>
        <div className={`${tabBase} mt-[13px] h-[55px] text-[#a8a8a8]`}>Live News</div>
    </div>
);

const Footer = () => (
    <div className="flex h-[17px] shrink-0 items-center bg-gradient-to-b from-black via-[#2c2c2c] to-[#050505] pl-[17px]">
        <div className="flex h-[16px] w-[16px] items-center justify-center rounded-full border border-[#506070]"><div className="h-[6px] w-[6px] rounded-full bg-[#88a0b8]" /></div>
        <div className="ml-[1px] flex h-[16px] w-[18px] items-center justify-center border border-[#3d4a5c] bg-[#1a222a]">
            <svg width="15" height="15" viewBox="0 0 15 15">
                <circle cx="9" cy="6" r="5" fill="#3a5060" stroke="#c8e0c8" />
                <path d="M9 3V9M6 6H12" stroke="#f0f0d8" strokeWidth="1.6" />
                <path d="M5 10L1 14" stroke="#90a8c0" strokeWidth="2" />
            </svg>
        </div>
        <div className="ml-[2px] flex h-[16px] w-[18px] items-center justify-center border border-[#3d4a5c] bg-[#1a222a]">
            <svg width="15" height="15" viewBox="0 0 15 15">
                <circle cx="9" cy="6" r="5" fill="#3a5060" stroke="#c8e0c8" />
                <path d="M6 6H12" stroke="#f0f0d8" strokeWidth="1.6" />
                <path d="M5 10L1 14" stroke="#90a8c0" strokeWidth="2" />
            </svg>
        </div>
        <div className="ml-[2px] flex h-[16px] w-[17px] flex-col items-center justify-center border border-[#3d4a5c] bg-[#1a222a] text-[11px] font-bold leading-[12px] text-[#a8d8f0]">
            $
            <div className="h-[1px] w-[12px] bg-white" />
        </div>
        <div className="ml-[2px] flex h-[16px] w-[15px] items-center justify-center bg-[#222]">
            <div className="h-0 w-0 border-y-[5px] border-r-[5px] border-y-transparent border-r-[#8a8a8a]" />
        </div>
        <div className="flex-1" />
        <div className="h-[15px] w-[322px] bg-[repeating-linear-gradient(90deg,#1f4470_0_1px,#173556_1px_2px)]" />
        <div className="ml-[2px] flex h-[15px] w-[15px] items-center justify-center bg-[#222]">
            <div className="h-0 w-0 border-y-[5px] border-l-[5px] border-y-transparent border-l-[#8a8a8a]" />
        </div>
        <div className="ml-[2px] mr-[2px] flex h-[16px] w-[17px] items-center justify-center gap-[1px] border border-[#6a7a8a] bg-[#10161e]">
            <div className="h-0 w-0 border-y-[4px] border-r-[4px] border-y-transparent border-r-[#d8f0e0]" />
            <div className="h-[7px] w-[2px] bg-[#60a8e0]" />
            <div className="h-0 w-0 border-y-[4px] border-l-[4px] border-y-transparent border-l-[#d8f0e0]" />
        </div>
    </div>
);

const App = () => {
    return (
        <div className="relative flex h-[946px] w-[1915px] flex-col overflow-hidden bg-[#2a2a2a] font-['Liberation_Sans',Arial,sans-serif]">
            <Header />
            <div className="flex h-[916px] shrink-0">
                <div className="w-[2px] shrink-0 bg-[#0a78e8]" />
                <div className="w-[3px] shrink-0 bg-black" />
                <div className="flex w-[1891px] shrink-0 flex-col bg-black">
                    <StatusRow cells={mainCells}>
                        <div className="ml-[4px] mt-[1px] flex h-[17px] w-[18px] items-center justify-center border border-[#8a98a8] bg-black">
                            <svg width="14" height="12" viewBox="0 0 14 12">
                                <path d="M1 10H4C7 10 7 2 10 2H13" fill="none" stroke="#fff" strokeWidth="1.4" />
                            </svg>
                        </div>
                    </StatusRow>
                    <PriceChart />
                    <Hatch className="h-[8px]" />
                    <StatusRow cells={volumeCells} />
                    <VolumeChart />
                    <Hatch className="h-[7px]" />
                    <StatusRow cells={oscCells} />
                    <OscChart />
                    <Footer />
                </div>
                <RightTabs />
            </div>
            <div className="h-[2px] shrink-0 bg-[#0a78e8]" />

            {/* note pasted over the chart */}
            <div className="absolute left-[1062px] top-[32px] h-[154px] w-[349px] rounded-[10px] border-[6px] border-[#ff0000] bg-white px-[11px] pt-[9px] font-['Open_Sans',sans-serif] text-[17px] leading-[24px] text-[#ff1818]">
                That's all i was focused upon. Not<br />good for commodities etc.
            </div>

            {/* collapse button in the corner */}
            <div className="absolute bottom-0 left-0 flex h-[26px] w-[14px] items-center justify-center border border-[#444] bg-[#222]">
                <svg width="11" height="10" viewBox="0 0 11 10">
                    <path d="M1 1V9H10V1Z" fill="#111" stroke="#9a9a9a" />
                    <path d="M3 2L7 5L3 8Z" fill="#ddd" />
                </svg>
            </div>
        </div>
    );
};

export default App;
